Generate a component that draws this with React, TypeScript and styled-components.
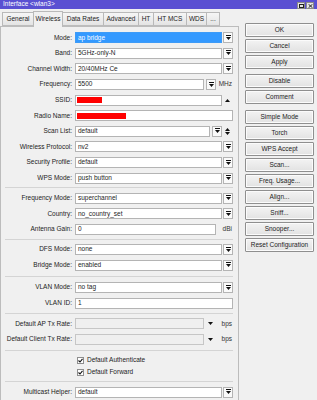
import React, { FC, ReactNode } from "react";
import styled, { createGlobalStyle } from "styled-components";

const GlobalStyle = createGlobalStyle`
  html, body {
    margin: 0;
    padding: 0;
    background: #f0f0f0;
  }
  body {
    font-family: "Liberation Sans", Arial, sans-serif;
    font-size: 6.5px;
    line-height: 1;
    color: #1c1c1c;
  }
  * {
    box-sizing: border-box;
  }
`;

const Window = styled.div`
  width: 317px;
  height: 400px;
  overflow: hidden;
  background: #f0f0f0;
  display: flex;
  flex-direction: column;
`;

const TitleBar = styled.div`
  height: 9px;
  flex-shrink: 0;
  background: #5a50d2;
  color: #ffffff;
  display: flex;
  align-items: center;
  justify-content: space-between;
  padding: 0 3px 0 3px;

  .caption {
    white-space: nowrap;
  }

  .controls {
    display: flex;
    gap: 1px;
    align-self: flex-end;
  }
`;

const WinButton = styled.div`
  width: 8px;
  height: 7px;
  background: #e6e6e6;
  border: 1px solid #8a8a8a;
  display: flex;
  align-items: center;
  justify-content: center;
`;

const Body = styled.div`
  flex: 1;
  display: flex;
`;

const LeftColumn = styled.div`
  width: 239px;
  flex-shrink: 0;
  display: flex;
  flex-direction: column;
`;

const TabStrip = styled.div`
  height: 17px;
  flex-shrink: 0;
  display: flex;
  align-items: flex-end;
  padding-left: 2px;
  position: relative;
  z-index: 1;
`;

const Tab = styled.div<{ $w: number; $active?: boolean }>`
  width: ${(p) => p.$w}px;
  height: ${(p) => (p.$active ? 16 : 14)}px;
  margin-right: -1px;
  margin-bottom: ${(p) => (p.$active ? -1 : 0)}px;
  border: 1px solid #b9b9b9;
  border-bottom: ${(p) => (p.$active ? "none" : "1px solid #bcbcbc")};
  background: ${(p) =>
    p.$active ? "#f0f0f0" : "linear-gradient(#f6f6f6, #e4e4e4)"};
  display: flex;
  align-items: center;
  justify-content: center;
  white-space: nowrap;
  position: relative;
  z-index: ${(p) => (p.$active ? 2 : 1)};
`;

const Panel = styled.div`
  flex: 1;
  border: 1px solid #bcbcbc;
  border-bottom: none;
  background: #f0f0f0;
  padding: 3px 5px 0 0;
`;

const Section = styled.div<{ $padTop?: number; $padBottom?: number }>`
  padding-top: ${(p) => p.$padTop || 0}px;
  padding-bottom: ${(p) => p.$padBottom || 0}px;
`;

const Divider = styled.div<{ $top?: number; $bottom?: number }>`
  height: 1px;
  background: #d4d4d4;
  margin: ${(p) => p.$top ?? 2}px 0 ${(p) => p.$bottom ?? 2}px 4px;
`;

const Row = styled.div`
  height: 15.6px;
  display: flex;
  align-items: center;
`;

const Label = styled.div`
  width: 71px;
  flex-shrink: 0;
  margin-right: 3px;
  text-align: right;
  white-space: nowrap;
`;

const Field = styled.div<{ $selected?: boolean; $disabled?: boolean }>`
  flex: 1;
  min-width: 0;
  height: 11px;
  padding-left: 2px;
  display: flex;
  align-items: center;
  white-space: nowrap;
  overflow: hidden;
  border: 1px solid
    ${(p) => (p.$selected ? "#3d9bf7" : p.$disabled ? "#c6c6c6" : "#b4b4b4")};
  background: ${(p) =>
    p.$selected ? "#3399ff" : p.$disabled ? "#efefef" : "#ffffff"};
  color: ${(p) => (p.$selected ? "#ffffff" : "#1c1c1c")};
`;

const Redact = styled.span<{ $w: number }>`
  display: inline-block;
  width: ${(p) => p.$w}px;
  height: 6px;
  background: #ff0000;
  margin-left: -1px;
`;

const DropBox = styled.div<{ $gap?: number }>`
  width: 10px;
  height: 11px;
  flex-shrink: 0;
  margin-left: ${(p) => p.$gap ?? 1}px;
  border: 1px solid #b4b4b4;
  background: #fafafa;
  display: flex;
  align-items: center;
  justify-content: center;
`;

const Slot = styled.div<{ $w: number }>`
  width: ${(p) => p.$w}px;
  flex-shrink: 0;
  display: flex;
  align-items: center;
  justify-content: center;
`;

const Unit = styled.div`
  width: 17px;
  flex-shrink: 0;
  text-align: right;
  padding-right: 1px;
  color: #333;
`;

const CheckRow = styled.div`
  height: 12px;
  display: flex;
  align-items: center;
  padding-left: 76px;
  gap: 3px;
  white-space: nowrap;
`;

const CheckBox = styled.div`
  width: 7px;
  height: 7px;
  border: 1px solid #8e8e8e;
  background: #ffffff;
  display: flex;
  align-items: center;
  justify-content: center;
`;

const ButtonColumn = styled.div`
  padding: 14px 0 0 6px;
  display: flex;
  flex-direction: column;
`;

const ButtonGroup = styled.div<{ $after?: number }>`
  display: flex;
  flex-direction: column;
  gap: 2px;
  margin-bottom: ${(p) => p.$after || 0}px;
`;

const Button = styled.div`
  width: 69px;
  height: 14px;
  border: 1px solid #8f8f8f;
  border-radius: 1px;
  background: linear-gradient(#f3f3f3, #e2e2e2);
  box-shadow: inset 0 0 0 1px #fbfbfb;
  display: flex;
  align-items: center;
  justify-content: center;
  white-space: nowrap;
  color: #1c1c1c;
`;

const DropIcon = () => (
  <svg width="5" height="6" viewBox="0 0 5 6">
    <rect x="0" y="0" width="5" height="1" fill="#111" />
    <path d="M0 2h5L2.5 5z" fill="#111" />
  </svg>
);

const UpIcon = () => (
  <svg width="5" height="3" viewBox="0 0 5 3">
    <path d="M2.5 0L5 3H0z" fill="#111" />
  </svg>
);

const DownIcon = () => (
  <svg width="5" height="3" viewBox="0 0 5 3">
    <path d="M0 0h5L2.5 3z" fill="#111" />
  </svg>
);

const UpDownIcon = () => (
  <svg width="5" height="7" viewBox="0 0 5 7">
    <path d="M2.5 0L5 3H0z" fill="#111" />
    <path d="M0 4h5L2.5 7z" fill="#111" />
  </svg>
);

const CheckIcon = () => (
  <svg width="5" height="5" viewBox="0 0 5 5">
    <path d="M0.5 2.5L2 4L4.5 0.8" fill="none" stroke="#111" strokeWidth="1.1" />
  </svg>
);

interface IFieldRow {
  label: string;
  value?: ReactNode;
  selected?: boolean;
  disabled?: boolean;
  children?: ReactNode;
}

const FieldRow: FC<IFieldRow> = ({ label, value, selected, disabled, children }) => (
  <Row>
    <Label>{label}</Label>
    <Field $selected={selected} $disabled={disabled}>
      {value}
    </Field>
    {children}
  </Row>
);

const Drop = () => (
  <DropBox>
    <DropIcon />
  </DropBox>
);

const tabs = [
  { name: "General", w: 32 },
  { name: "Wireless", w: 30, active: true },
  { name: "Data Rates", w: 42 },
  { name: "Advanced", w: 36 },
  { name: "HT", w: 16 },
  { name: "HT MCS", w: 34 },
  { name: "WDS", w: 21 },
  { name: "...", w: 14 },
];

const buttonGroups = [
  { items: ["OK", "Cancel", "Apply"], after: 5 },
  { items: ["Disable", "Comment"], after: 6 },
  {
    items: [
      "Simple Mode",
      "Torch",
      "WPS Accept",
      "Scan...",
      "Freq. Usage...",
      "Align...",
      "Sniff...",
      "Snooper...",
      "Reset Configuration",
    ],
    after: 0,
  },
];

const App: FC = () => {
  return (
    <Window>
      <GlobalStyle />
      <TitleBar>
        <span className="caption">{"Interface <wlan3>"}</span>
        <div className="controls">
          <WinButton>
            <svg width="5" height="4" viewBox="0 0 5 4">
              <rect x="0.5" y="0.5" width="4" height="3" fill="none" stroke="#222" />
            </svg>
          </WinButton>
          <WinButton>
            <svg width="5" height="4" viewBox="0 0 5 4">
              <path d="M0.5 0.2L4.5 3.8M4.5 0.2L0.5 3.8" stroke="#222" strokeWidth="1" />
            </svg>
          </WinButton>
        </div>
      </TitleBar>

      <Body>
        <LeftColumn>
          <TabStrip>
            {tabs.map((t) => (
              <Tab key={t.name} $w={t.w} $active={t.active}>
                {t.name}
              </Tab>
            ))}
          </TabStrip>

          <Panel>
            <Section>
              <FieldRow label="Mode:" value="ap bridge" selected>
                <Drop />
              </FieldRow>
              <FieldRow label="Band:" value="5GHz-only-N">
                <Drop />
              </FieldRow>
              <FieldRow label="Channel Width:" value="20/40MHz Ce">
                <Drop />
              </FieldRow>
              <FieldRow label="Frequency:" value="5500">
                <DropBox $gap={2}>
                  <DropIcon />
                </DropBox>
                <Unit>MHz</Unit>
              </FieldRow>
              <FieldRow label="SSID:" value={<Redact $w={25} />}>
                <Slot $w={11}>
                  <UpIcon />
                </Slot>
              </FieldRow>
              <FieldRow label="Radio Name:" value={<Redact $w={49} />} />
              <FieldRow label="Scan List:" value="default">
                <DropBox $gap={2}>
                  <DropIcon />
                </DropBox>
                <Slot $w={11}>
                  <UpDownIcon />
                </Slot>
              </FieldRow>
              <FieldRow label="Wireless Protocol:" value="nv2">
                <Drop />
              </FieldRow>
              <FieldRow label="Security Profile:" value="default">
                <Drop />
              </FieldRow>
              <FieldRow label="WPS Mode:" value="push button">
                <Drop />
              </FieldRow>
            </Section>

            <Divider $top={1.5} $bottom={2} />

            <Section>
              <FieldRow label="Frequency Mode:" value="superchannel">
                <Drop />
              </FieldRow>
              <FieldRow label="Country:" value="no_country_set">
                <Drop />
              </FieldRow>
              <FieldRow label="Antenna Gain:" value="0">
                <Unit>dBi</Unit>
              </FieldRow>
            </Section>

            <Divider $top={1.5} $bottom={2} />

            <Section>
              <FieldRow label="DFS Mode:" value="none">
                <Drop />
              </FieldRow>
              <FieldRow label="Bridge Mode:" value="enabled">
                <Drop />
              </FieldRow>
            </Section>

            <Divider $top={3} $bottom={3} />

            <Section>
              <FieldRow label="VLAN Mode:" value="no tag">
                <Drop />
              </FieldRow>
              <FieldRow label="VLAN ID:" value="1" />
            </Section>

            <Divider />

            <Section>
              <FieldRow label="Default AP Tx Rate:" disabled>
                <Slot $w={12}>
                  <DownIcon />
                </Slot>
                <Unit>bps</Unit>
              </FieldRow>
              <FieldRow label="Default Client Tx Rate:" disabled>
                <Slot $w={12}>
                  <DownIcon />
                </Slot>
                <Unit>bps</Unit>
              </FieldRow>
            </Section>

            <Divider $top={3} $bottom={2} />

            <Section $padTop={1} $padBottom={1}>
              <CheckRow>
                <CheckBox>
                  <CheckIcon />
                </CheckBox>
                Default Authenticate
              </CheckRow>
              <CheckRow>
                <CheckBox>
                  <CheckIcon />
                </CheckBox>
                Default Forward
              </CheckRow>
            </Section>

            <Divider />

            <Section>
              <FieldRow label="Multicast Helper:" value="default">
                <Drop />
              </FieldRow>
            </Section>
          </Panel>
        </LeftColumn>

        <ButtonColumn>
          {buttonGroups.map((g, i) => (
            <ButtonGroup key={i} $after={g.after}>
              {g.items.map((b) => (
                <Button key={b}>{b}</Button>
              ))}
            </ButtonGroup>
          ))}
        </ButtonColumn>
      </Body>
    </Window>
  );
};

export default App;
